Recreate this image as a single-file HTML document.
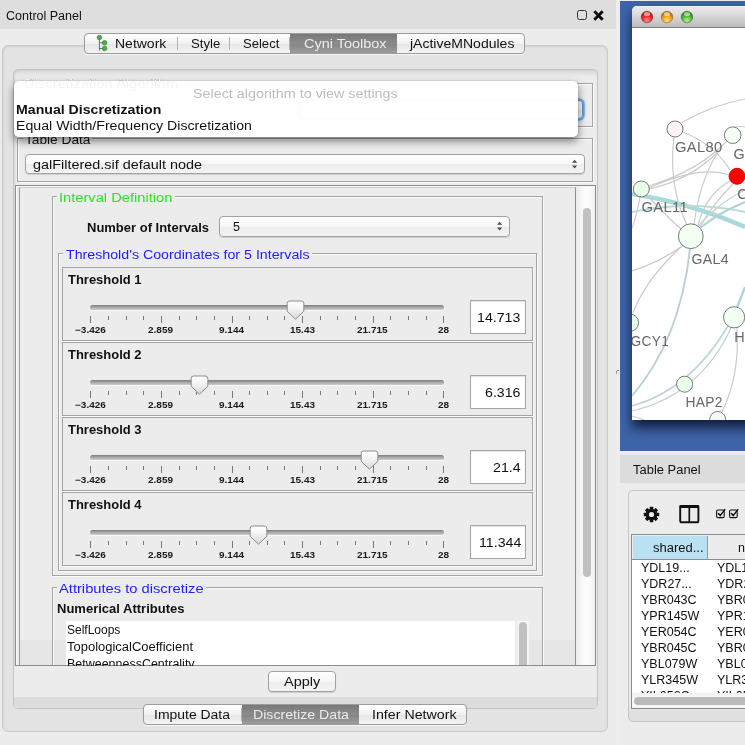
<!DOCTYPE html>
<html><head><meta charset="utf-8">
<style>
html,body{margin:0;padding:0;}
body{width:745px;height:745px;overflow:hidden;background:#ececec;font-family:"Liberation Sans",sans-serif;font-size:13px;color:#111;position:relative;}
.abs{position:absolute;}
.t{position:absolute;white-space:pre;line-height:16px;transform-origin:0 0;will-change:transform;}
.b{font-weight:bold;}
/* title strip */
#title{left:0;top:0;width:616px;height:29px;background:#dedede;}
/* outer rounded panel */
#outer{left:1.5px;top:45px;width:606.5px;height:687px;border:1px solid #cbcbcb;border-radius:6px;background:#e3e3e3;box-sizing:border-box;box-shadow:inset 0 1px 2px rgba(0,0,0,.07),inset 1px 0 2px rgba(0,0,0,.05);}
#inner{left:12.5px;top:69px;width:585.5px;height:640px;border:1px solid #c4c4c4;border-radius:5px;background:linear-gradient(#d9d9d9,#ececec 7px);box-sizing:border-box;box-shadow:inset 1px 0 2px rgba(0,0,0,.10);}
/* tabs */
.tabs{position:absolute;height:21px;border:1px solid #9c9c9c;border-radius:4px;box-sizing:border-box;background:linear-gradient(#ffffff,#f1f1f1 50%,#e6e6e6 51%,#f3f3f3);display:flex;overflow:hidden;box-shadow:0 1px 0 rgba(255,255,255,.6);}
.tabs div{height:19px;box-sizing:border-box;position:relative;}
.tabs div:after{content:"";position:absolute;right:0;top:3px;height:13px;width:1px;background:#b2b2b2;}
.tabs div:last-child:after{display:none;}
.tabs div.sel{background:linear-gradient(#787878,#8c8c8c 50%,#848484 51%,#9c9c9c);}
.tabs div.sel:after{display:none;}
/* etched group borders */
.grp{position:absolute;box-sizing:border-box;border:1px solid #a4a4a4;box-shadow:1px 1px 0 #fafafa, inset 1px 1px 0 #fafafa;}
.gap{position:absolute;background:#ececec;height:5px;}
.combo{position:absolute;box-sizing:border-box;border:1px solid #a2a2a2;border-radius:4px;background:linear-gradient(#ffffff,#f6f6f6 50%,#ececec 51%,#f4f4f4);box-shadow:0 1px 1px rgba(0,0,0,.12);}
.combo span{position:absolute;left:8px;top:1px;line-height:16px;font-size:13px;}
.arr{position:absolute;right:6.5px;top:4.2px;width:5.2px;height:10.2px;}
.field{position:absolute;box-sizing:border-box;width:56px;height:34px;border:1px solid #a6a6a6;background:#fff;box-shadow:inset 0 1px 1px rgba(0,0,0,.12);text-align:right;line-height:32px;font-size:14px;padding-right:4px;}
.th{position:absolute;left:62px;width:471px;height:74px;box-sizing:border-box;border:1px solid #a4a4a4;box-shadow:1px 1px 0 #fafafa;}
.th .name{position:absolute;left:4px;top:4px;font-weight:bold;font-size:13px;line-height:16px;}
.track{position:absolute;left:27px;top:37.2px;width:354px;height:4.5px;border-radius:2.5px;background:linear-gradient(#7c7c7c,#a6a6a6 45%,#cecece);box-shadow:0 1px 0 #f8f8f8;}
.tk{position:absolute;top:48px;width:1px;background:#777;}
.tl{position:absolute;top:56px;width:60px;margin-left:-30px;text-align:center;font-size:10px;font-weight:bold;line-height:12px;color:#222;}
.knob{position:absolute;top:32.2px;width:19px;height:21px;}
</style></head><body>

<div class="abs" id="title"></div>
<!-- float / close icons -->
<div class="abs" style="left:577px;top:10px;width:10px;height:10px;border:1.3px solid #333;border-radius:2.5px;box-sizing:border-box;"></div>
<svg class="abs" style="left:593px;top:10px" width="11" height="11" viewBox="0 0 11 11"><path d="M1.3 1.3 L9.7 9.7 M9.7 1.3 L1.3 9.7" stroke="#0a0a0a" stroke-width="2.9"/></svg>

<div class="abs" id="outer"></div>
<div class="abs" id="inner"></div>

<!-- top tabs -->
<div class="tabs" style="left:84px;top:33px;width:441px;">
  <div style="width:93px;"></div>
  <div style="width:52px;"></div>
  <div style="width:60px;"></div>
  <div class="sel" style="width:107px;"></div>
  <div style="width:126px;"></div>
</div>
<svg class="abs" style="left:96px;top:35px" width="14" height="18" viewBox="0 0 14 18">
  <path d="M3.4 3 V15.6 M3.4 7.8 H7 M3.4 13.5 H7" stroke="#5f6f9f" stroke-width="1" fill="none"/>
  <circle cx="3.4" cy="2.5" r="2.3" fill="#58aa48" stroke="#2f8a2f" stroke-width=".7"/>
  <circle cx="8.6" cy="7.8" r="2.3" fill="#58aa48" stroke="#2f8a2f" stroke-width=".7"/>
  <circle cx="8.6" cy="13.5" r="2.3" fill="#58aa48" stroke="#2f8a2f" stroke-width=".7"/>
</svg>

<!-- Discretization algorithm group (mostly hidden under popup) -->
<div class="grp" style="left:17px;top:83px;width:576px;height:44px;"></div>
<div class="combo" style="left:300px;top:100px;width:283px;height:19px;border-color:#5a90d4;box-shadow:0 0 0 1.6px #6aa0e0,0 0 2px 2px rgba(110,165,230,.55);"></div>

<!-- Table data group -->
<div class="grp" style="left:17px;top:138px;width:576px;height:44px;"></div>
<div class="gap" style="left:23px;top:136px;width:69px;"></div>
<div class="combo" style="left:25px;top:154px;width:560px;height:20px;">
 <svg class="arr" viewBox="0 0 6 10"><path d="M3 0 L6 3.4 H0 Z M3 10 L6 6.6 H0 Z" fill="#4a4a4a"/></svg></div>

<!-- scroll pane -->
<div class="abs" style="left:15px;top:185px;width:581px;height:481px;box-sizing:border-box;border:1px solid #8c8c8c;"></div>
<div class="abs" style="left:16px;top:186px;width:579px;height:480px;box-sizing:border-box;border-left:1px solid #fafafa;border-top:1px solid #f6f6f6;"></div>
<div class="abs" style="left:19px;top:187px;width:557px;height:479px;box-sizing:border-box;border-left:1px solid #9c9c9c;border-right:1px solid #8e8e8e;border-top:1px solid #cfcfcf;"></div>
<!-- vertical scrollbar -->
<div class="abs" style="left:577px;top:187px;width:18px;height:479px;background:linear-gradient(90deg,#ececec,#f6f6f6 25%,#fdfdfd 50%,#f8f8f8 80%,#ededed);"></div>
<div class="abs" style="left:583px;top:208px;width:8px;height:369px;border-radius:4px;background:#c0c0c0;"></div>

<!-- Interval definition -->
<div class="grp" style="left:52px;top:196px;width:491px;height:380px;"></div>
<div class="gap" style="left:57px;top:194px;width:118px;"></div>
<div class="combo" style="left:219px;top:216px;width:291px;height:21px;">
 <svg class="arr" viewBox="0 0 6 10"><path d="M3 0 L6 3.4 H0 Z M3 10 L6 6.6 H0 Z" fill="#4a4a4a"/></svg></div>

<div class="grp" style="left:58px;top:253px;width:479px;height:318px;"></div>
<div class="gap" style="left:63px;top:251px;width:249px;"></div>

<!-- thresholds inserted here -->
<div class="th" style="top:267px;"><div class="track"></div><div class="tk" style="left:27.3px;height:7px;"></div><div class="tk" style="left:44.9px;height:3.5px;"></div><div class="tk" style="left:62.6px;height:3.5px;"></div><div class="tk" style="left:80.2px;height:3.5px;"></div><div class="tk" style="left:97.9px;height:7px;"></div><div class="tk" style="left:115.5px;height:3.5px;"></div><div class="tk" style="left:133.2px;height:3.5px;"></div><div class="tk" style="left:150.8px;height:3.5px;"></div><div class="tk" style="left:168.5px;height:7px;"></div><div class="tk" style="left:186.1px;height:3.5px;"></div><div class="tk" style="left:203.8px;height:3.5px;"></div><div class="tk" style="left:221.4px;height:3.5px;"></div><div class="tk" style="left:239.1px;height:7px;"></div><div class="tk" style="left:256.8px;height:3.5px;"></div><div class="tk" style="left:274.4px;height:3.5px;"></div><div class="tk" style="left:292.1px;height:3.5px;"></div><div class="tk" style="left:309.7px;height:7px;"></div><div class="tk" style="left:327.3px;height:3.5px;"></div><div class="tk" style="left:345.0px;height:3.5px;"></div><div class="tk" style="left:362.6px;height:3.5px;"></div><div class="tk" style="left:380.3px;height:7px;"></div><svg class="knob" style="left:223.0px" viewBox="0 0 19 21"><defs><linearGradient id="g0" x1="0" y1="0" x2="0" y2="1"><stop offset="0" stop-color="#ffffff"/><stop offset=".35" stop-color="#f6f6f6"/><stop offset="1" stop-color="#d8d8d8"/></linearGradient></defs><path d="M3.6 1 H15.4 Q17.85 1 17.85 3.4 V11.3 L9.5 19.2 L1.15 11.3 V3.4 Q1.15 1 3.6 1 Z" fill="url(#g0)" stroke="#8c8c8c" stroke-width="1"/></svg><div class="field" style="left:407px;top:32px;"></div></div>
<div class="th" style="top:342px;"><div class="track"></div><div class="tk" style="left:27.3px;height:7px;"></div><div class="tk" style="left:44.9px;height:3.5px;"></div><div class="tk" style="left:62.6px;height:3.5px;"></div><div class="tk" style="left:80.2px;height:3.5px;"></div><div class="tk" style="left:97.9px;height:7px;"></div><div class="tk" style="left:115.5px;height:3.5px;"></div><div class="tk" style="left:133.2px;height:3.5px;"></div><div class="tk" style="left:150.8px;height:3.5px;"></div><div class="tk" style="left:168.5px;height:7px;"></div><div class="tk" style="left:186.1px;height:3.5px;"></div><div class="tk" style="left:203.8px;height:3.5px;"></div><div class="tk" style="left:221.4px;height:3.5px;"></div><div class="tk" style="left:239.1px;height:7px;"></div><div class="tk" style="left:256.8px;height:3.5px;"></div><div class="tk" style="left:274.4px;height:3.5px;"></div><div class="tk" style="left:292.1px;height:3.5px;"></div><div class="tk" style="left:309.7px;height:7px;"></div><div class="tk" style="left:327.3px;height:3.5px;"></div><div class="tk" style="left:345.0px;height:3.5px;"></div><div class="tk" style="left:362.6px;height:3.5px;"></div><div class="tk" style="left:380.3px;height:7px;"></div><svg class="knob" style="left:126.8px" viewBox="0 0 19 21"><defs><linearGradient id="g1" x1="0" y1="0" x2="0" y2="1"><stop offset="0" stop-color="#ffffff"/><stop offset=".35" stop-color="#f6f6f6"/><stop offset="1" stop-color="#d8d8d8"/></linearGradient></defs><path d="M3.6 1 H15.4 Q17.85 1 17.85 3.4 V11.3 L9.5 19.2 L1.15 11.3 V3.4 Q1.15 1 3.6 1 Z" fill="url(#g1)" stroke="#8c8c8c" stroke-width="1"/></svg><div class="field" style="left:407px;top:32px;"></div></div>
<div class="th" style="top:417px;"><div class="track"></div><div class="tk" style="left:27.3px;height:7px;"></div><div class="tk" style="left:44.9px;height:3.5px;"></div><div class="tk" style="left:62.6px;height:3.5px;"></div><div class="tk" style="left:80.2px;height:3.5px;"></div><div class="tk" style="left:97.9px;height:7px;"></div><div class="tk" style="left:115.5px;height:3.5px;"></div><div class="tk" style="left:133.2px;height:3.5px;"></div><div class="tk" style="left:150.8px;height:3.5px;"></div><div class="tk" style="left:168.5px;height:7px;"></div><div class="tk" style="left:186.1px;height:3.5px;"></div><div class="tk" style="left:203.8px;height:3.5px;"></div><div class="tk" style="left:221.4px;height:3.5px;"></div><div class="tk" style="left:239.1px;height:7px;"></div><div class="tk" style="left:256.8px;height:3.5px;"></div><div class="tk" style="left:274.4px;height:3.5px;"></div><div class="tk" style="left:292.1px;height:3.5px;"></div><div class="tk" style="left:309.7px;height:7px;"></div><div class="tk" style="left:327.3px;height:3.5px;"></div><div class="tk" style="left:345.0px;height:3.5px;"></div><div class="tk" style="left:362.6px;height:3.5px;"></div><div class="tk" style="left:380.3px;height:7px;"></div><svg class="knob" style="left:296.8px" viewBox="0 0 19 21"><defs><linearGradient id="g2" x1="0" y1="0" x2="0" y2="1"><stop offset="0" stop-color="#ffffff"/><stop offset=".35" stop-color="#f6f6f6"/><stop offset="1" stop-color="#d8d8d8"/></linearGradient></defs><path d="M3.6 1 H15.4 Q17.85 1 17.85 3.4 V11.3 L9.5 19.2 L1.15 11.3 V3.4 Q1.15 1 3.6 1 Z" fill="url(#g2)" stroke="#8c8c8c" stroke-width="1"/></svg><div class="field" style="left:407px;top:32px;"></div></div>
<div class="th" style="top:492px;"><div class="track"></div><div class="tk" style="left:27.3px;height:7px;"></div><div class="tk" style="left:44.9px;height:3.5px;"></div><div class="tk" style="left:62.6px;height:3.5px;"></div><div class="tk" style="left:80.2px;height:3.5px;"></div><div class="tk" style="left:97.9px;height:7px;"></div><div class="tk" style="left:115.5px;height:3.5px;"></div><div class="tk" style="left:133.2px;height:3.5px;"></div><div class="tk" style="left:150.8px;height:3.5px;"></div><div class="tk" style="left:168.5px;height:7px;"></div><div class="tk" style="left:186.1px;height:3.5px;"></div><div class="tk" style="left:203.8px;height:3.5px;"></div><div class="tk" style="left:221.4px;height:3.5px;"></div><div class="tk" style="left:239.1px;height:7px;"></div><div class="tk" style="left:256.8px;height:3.5px;"></div><div class="tk" style="left:274.4px;height:3.5px;"></div><div class="tk" style="left:292.1px;height:3.5px;"></div><div class="tk" style="left:309.7px;height:7px;"></div><div class="tk" style="left:327.3px;height:3.5px;"></div><div class="tk" style="left:345.0px;height:3.5px;"></div><div class="tk" style="left:362.6px;height:3.5px;"></div><div class="tk" style="left:380.3px;height:7px;"></div><svg class="knob" style="left:186.0px" viewBox="0 0 19 21"><defs><linearGradient id="g3" x1="0" y1="0" x2="0" y2="1"><stop offset="0" stop-color="#ffffff"/><stop offset=".35" stop-color="#f6f6f6"/><stop offset="1" stop-color="#d8d8d8"/></linearGradient></defs><path d="M3.6 1 H15.4 Q17.85 1 17.85 3.4 V11.3 L9.5 19.2 L1.15 11.3 V3.4 Q1.15 1 3.6 1 Z" fill="url(#g3)" stroke="#8c8c8c" stroke-width="1"/></svg><div class="field" style="left:407px;top:32px;"></div></div>

<!-- Attributes to discretize -->
<div class="abs" style="left:20px;top:640px;width:555px;height:26px;background:#e6e6e6;"></div>
<div class="grp" style="left:52px;top:587px;width:491px;height:90px;border-bottom:none;"></div>
<div class="gap" style="left:57px;top:585px;width:149px;"></div>
<div class="abs" style="left:66px;top:621px;width:463px;height:46px;background:#fff;"></div>
<div class="abs" style="left:515px;top:621px;width:14px;height:46px;background:linear-gradient(90deg,#e9e9e9,#f6f6f6 30%,#fdfdfd 60%,#f4f4f4);"></div>
<div class="abs" style="left:519px;top:622px;width:7.5px;height:45px;border-radius:4px 4px 0 0;background:#c0c0c0;"></div>

<!-- bottom strip w/ Apply -->
<div class="abs" style="left:14px;top:666px;width:583px;height:42px;background:#ececec;border-radius:0 0 4px 4px;"></div>
<div class="abs" style="left:15px;top:665px;width:581px;height:1px;background:#8c8c8c;"></div>
<div class="abs" style="left:14px;top:697px;width:583px;height:11px;background:#dcdcdc;border-radius:0 0 4px 4px;"></div>
<div class="combo" style="left:268px;top:671px;width:68px;height:21px;"></div>

<!-- bottom tabs -->
<div class="tabs" style="left:143px;top:704px;width:324px;">
  <div style="width:98px;"></div>
  <div class="sel" style="width:118px;"></div>
  <div style="width:107px;"></div>
</div>

<div class="t" style="left:25.10px;top:132.37px;font-size:12.5px;color:#111;transform:scaleX(1.0943);">Table Data</div>
<div class="t" style="left:24.10px;top:75.92px;font-size:13.5px;color:#111;transform:scaleX(1.0946);">Discretization Algorithm</div>
<!-- popup -->
<div class="abs" style="left:14px;top:81px;width:564px;height:56px;background:rgba(255,255,255,.975);border-radius:5px;box-shadow:0 4px 8px rgba(0,0,0,.5),0 0 1px rgba(0,0,0,.45);"></div>

<!-- RIGHT SIDE -->
<div class="abs" style="left:616px;top:0;width:4px;height:745px;background:#ededed;"></div>
<div class="abs" style="left:620px;top:0;width:125px;height:745px;background:#ececec;"></div>
<div class="abs" id="desk" style="left:620px;top:1px;width:125px;height:450px;background:#3d63a9;overflow:hidden;">
  <!-- window shadow -->
  <div class="abs" style="left:12px;top:5px;width:125px;height:414px;box-shadow:0 8px 12px 0px rgba(0,0,20,.7);border-radius:5px 5px 0 0;background:#fff;"></div>
  <!-- title bar -->
  <div class="abs" style="left:12px;top:5px;width:125px;height:21px;border-radius:5px 0 0 0;background:linear-gradient(#ededed,#d6d6d6 50%,#bcbcbc);border-bottom:1px solid #7e7e7e;box-sizing:content-box;"></div>
  <svg class="abs" style="left:12px;top:5px" width="113" height="21" viewBox="0 0 113 21">
    <defs>
      <radialGradient id="rr" cx=".5" cy=".8" r=".7"><stop offset="0" stop-color="#ff8a8a"/><stop offset=".55" stop-color="#ee2d2d"/><stop offset="1" stop-color="#a81414"/></radialGradient>
      <radialGradient id="ry" cx=".5" cy=".8" r=".7"><stop offset="0" stop-color="#ffe07a"/><stop offset=".55" stop-color="#f0a21e"/><stop offset="1" stop-color="#a86a10"/></radialGradient>
      <radialGradient id="rg" cx=".5" cy=".8" r=".7"><stop offset="0" stop-color="#b8f09a"/><stop offset=".55" stop-color="#58b83a"/><stop offset="1" stop-color="#2e7a1c"/></radialGradient>
    </defs>
    <circle cx="15" cy="11" r="5.8" fill="url(#rr)" stroke="#8a3030" stroke-width=".6"/>
    <circle cx="35" cy="11" r="5.8" fill="url(#ry)" stroke="#8a6a30" stroke-width=".6"/>
    <circle cx="55" cy="11" r="5.8" fill="url(#rg)" stroke="#3a7a30" stroke-width=".6"/>
    <ellipse cx="15" cy="8" rx="3.2" ry="2" fill="rgba(255,255,255,.55)"/>
    <ellipse cx="35" cy="8" rx="3.2" ry="2" fill="rgba(255,255,255,.55)"/>
    <ellipse cx="55" cy="8" rx="3.2" ry="2" fill="rgba(255,255,255,.55)"/>
  </svg>
  <!-- canvas: page coords = svg coords + (632,28) ; svg placed at desk-relative (12,27) -->
  <svg class="abs" style="left:12px;top:27px;background:#fff;will-change:transform" width="113" height="392" viewBox="632 28 113 392" font-family="Liberation Sans, sans-serif">
    <g fill="none" stroke="#cbcbcb" stroke-width="1.2">
      <path d="M681 123 Q712 105 745 99"/>
      <path d="M683 132 Q715 145 730 170"/>
      <path d="M674 137 Q668 185 687 225"/>
      <path d="M649 186 Q700 170 727 141"/>
      <path d="M649 189 Q690 180 718 152 "/>
      <path d="M649 188 Q700 165 729 175"/>
      <path d="M718 152 Q700 180 694 224"/>
      <path d="M730 181 Q705 195 698 226"/>
      <path d="M733 184 Q712 205 700 227"/>
      <path d="M647 195 Q665 215 681 229"/>
      <path d="M640 197 Q637 215 632 228"/>
      <path d="M684 245 Q660 262 632 271"/>
      <path d="M682 246 Q645 280 633 313"/>
      <path d="M731 328 Q700 395 632 411"/>
      <path d="M737 328 Q740 375 722 412"/>
      <path d="M632 416 Q640 418 646 421"/>
      <path d="M735 127 Q740 126 745 127"/>
    </g>
    <g fill="none" stroke-linecap="butt">
      <path d="M632 194 Q690 203 745 227" stroke="#a9d9da" stroke-width="4.6"/>
      <path d="M632 212 Q690 200 745 212" stroke="#bcdada" stroke-width="2"/>
      <path d="M700 228 Q720 212 745 202" stroke="#b4d4d4" stroke-width="2.2"/>
      <path d="M697 228 Q715 205 745 190" stroke="#c0d8d8" stroke-width="1.3"/>
      <path d="M690 249 Q680 340 632 396" stroke="#b7d1d3" stroke-width="1.9"/>
      <path d="M728 326 Q690 390 632 406" stroke="#bcd4d5" stroke-width="1.6"/>
      <path d="M745 287 Q741 298 737 307" stroke="#a9d5d6" stroke-width="2.2"/>
    </g>
    <g stroke="#6a6a6a" stroke-width=".9">
      <circle cx="675" cy="129" r="8" fill="#fff3f3"/>
      <circle cx="732.7" cy="135.2" r="8.3" fill="#f5fff5"/>
      <circle cx="737" cy="176.3" r="8" fill="#ff0000" stroke="#e00000"/>
      <circle cx="641.3" cy="189" r="8" fill="#e9ffe9"/>
      <circle cx="690.8" cy="236.2" r="12.4" fill="#f3fff3"/>
      <circle cx="734.1" cy="317.3" r="10.6" fill="#f3fff3"/>
      <circle cx="630" cy="322.7" r="8.6" fill="#e6ffe6"/>
      <circle cx="684.6" cy="384.2" r="8" fill="#ecffec"/>
      <circle cx="717.7" cy="419.5" r="8" fill="#f0fff0"/>
    </g>
    <g fill="#676767" font-size="14.4" letter-spacing=".3">
      <text x="675" y="151.7" textLength="47.5" lengthAdjust="spacingAndGlyphs">GAL80</text>
      <text x="733.5" y="158.7">GA</text>
      <text x="737.2" y="199.3">C</text>
      <text x="641.5" y="211.6" textLength="46.5" lengthAdjust="spacingAndGlyphs">GAL11</text>
      <text x="691.5" y="263.8" textLength="37.3" lengthAdjust="spacingAndGlyphs">GAL4</text>
      <text x="630.6" y="345.6" textLength="38.5" lengthAdjust="spacingAndGlyphs">GCY1</text>
      <text x="734.3" y="342.3">H</text>
      <text x="685.5" y="407.4" textLength="37.3" lengthAdjust="spacingAndGlyphs">HAP2</text>
    </g>
  </svg>
</div>

<!-- small divider mark -->
<div class="abs" style="left:616px;top:370px;width:3px;height:4px;border-top:1px solid #777;border-left:1px solid #999;border-radius:2px 0 0 0;box-sizing:border-box;"></div>

<!-- Table panel -->
<div class="abs" style="left:620px;top:455px;width:125px;height:28px;background:#dcdcdc;"></div>
<div class="abs" style="left:628px;top:490px;width:130px;height:232px;box-sizing:border-box;border:1px solid #c4c4c4;border-radius:5px;background:linear-gradient(#ececec 0,#ececec 212px,#e0e0e0 220px);"></div>
<!-- gear -->
<svg class="abs" style="left:642px;top:505px" width="19" height="19" viewBox="-9.5 -9.5 19 19">
  <g fill="#111">
    <circle r="5.7"/>
    <g id="teeth"><rect x="-1.8" y="-7.7" width="3.6" height="15.4" rx=".6"/></g>
    <rect x="-1.8" y="-7.7" width="3.6" height="15.4" rx=".6" transform="rotate(45)"/>
    <rect x="-1.8" y="-7.7" width="3.6" height="15.4" rx=".6" transform="rotate(90)"/>
    <rect x="-1.8" y="-7.7" width="3.6" height="15.4" rx=".6" transform="rotate(135)"/>
  </g>
  <circle r="2.6" fill="#ececec"/>
</svg>
<!-- split icon -->
<svg class="abs" style="left:678px;top:504px" width="23" height="21" viewBox="0 0 23 21">
  <rect x="2.2" y="2" width="18.2" height="16.3" rx="1.6" fill="none" stroke="#111" stroke-width="1.9"/>
  <rect x="1.4" y="1" width="19.8" height="3" rx="1.2" fill="#111"/>
  <path d="M11.3 3 V18" stroke="#111" stroke-width="1.7"/>
</svg>
<!-- checkboxes -->
<svg class="abs" style="left:715px;top:507px" width="30" height="13" viewBox="0 0 30 13">
  <g fill="none" stroke="#111" stroke-width="1.1">
    <rect x="1.6" y="3" width="7.6" height="7.6" rx="1.4"/>
    <rect x="14.6" y="3" width="7.6" height="7.6" rx="1.4"/>
  </g>
  <g fill="none" stroke="#111" stroke-width="1.5" stroke-linecap="round" stroke-linejoin="round">
    <path d="M3.4 6.6 L5.2 8.6 L9.8 2.6"/>
    <path d="M16.4 6.6 L18.2 8.6 L22.8 2.6"/>
  </g>
</svg>
<!-- table -->
<div class="abs" style="left:631px;top:534px;width:120px;height:175px;box-sizing:border-box;border:1px solid #8a8a8a;background:#fff;"></div>
<div class="abs" style="left:632px;top:535px;width:113px;height:24px;background:#ececec;border-bottom:1px solid #8e8e8e;"></div>
<div class="abs" style="left:633px;top:536px;width:75px;height:23px;background:#b9e1f2;border-right:1px solid #9a9a9a;box-sizing:border-box;"></div>
<div class="abs" style="left:632px;top:693px;width:113px;height:15px;background:linear-gradient(#efefef,#fbfbfb 40%,#f4f4f4);"></div>
<div class="abs" style="left:634px;top:697px;width:130px;height:8px;border-radius:4px;background:#bababa;"></div>

<div class="t" style="left:6.40px;top:8.17px;font-size:12.5px;color:#111;transform:scaleX(0.9967);">Control Panel</div>
<div class="t" style="left:114.60px;top:35.87px;font-size:12.5px;color:#111;transform:scaleX(1.1190);">Network</div>
<div class="t" style="left:190.70px;top:35.87px;font-size:12.5px;color:#111;transform:scaleX(1.0541);">Style</div>
<div class="t" style="left:243.40px;top:35.87px;font-size:12.5px;color:#111;transform:scaleX(1.0446);">Select</div>
<div class="t" style="left:303.50px;top:35.87px;font-size:12.5px;color:#ececec;transform:scaleX(1.1564);">Cyni Toolbox</div>
<div class="t" style="left:410.20px;top:35.87px;font-size:12.5px;color:#111;transform:scaleX(1.1215);">jActiveMNodules</div>
<div class="t" style="left:153.50px;top:706.77px;font-size:12.5px;color:#111;transform:scaleX(1.1161);">Impute Data</div>
<div class="t" style="left:253.10px;top:706.77px;font-size:12.5px;color:#ececec;transform:scaleX(1.1327);">Discretize Data</div>
<div class="t" style="left:372.00px;top:706.77px;font-size:12.5px;color:#111;transform:scaleX(1.1380);">Infer Network</div>
<div class="t" style="left:284.10px;top:674.37px;font-size:12.5px;color:#111;transform:scaleX(1.1572);">Apply</div>
<div class="t" style="left:32.80px;top:156.97px;font-size:12.5px;color:#111;transform:scaleX(1.1526);">galFiltered.sif default node</div>
<div class="t" style="left:59.30px;top:190.27px;font-size:12.5px;color:#2ae32a;transform:scaleX(1.1731);">Interval Definition</div>
<div class="t" style="left:86.80px;top:219.97px;font-size:12.5px;color:#111;font-weight:bold;transform:scaleX(1.0393);">Number of Intervals</div>
<div class="t" style="left:233.00px;top:219.17px;font-size:12.5px;color:#111;">5</div>
<div class="t" style="left:65.80px;top:247.07px;font-size:12.5px;color:#1e1ef6;transform:scaleX(1.1367);">Threshold's Coordinates for 5 Intervals</div>
<div class="t" style="left:67.50px;top:272.17px;font-size:12.5px;color:#111;font-weight:bold;transform:scaleX(1.0375);">Threshold 1</div>
<div class="t" style="left:477.46px;top:309.90px;font-size:13px;color:#111;transform:scaleX(1.0900);">14.713</div>
<div class="t" style="left:74.88px;top:322.18px;font-size:9px;color:#1a1a1a;font-weight:bold;transform:scaleX(1.1100);">−3.426</div>
<div class="t" style="left:148.40px;top:322.18px;font-size:9px;color:#1a1a1a;font-weight:bold;transform:scaleX(1.1100);">2.859</div>
<div class="t" style="left:219.00px;top:322.18px;font-size:9px;color:#1a1a1a;font-weight:bold;transform:scaleX(1.1100);">9.144</div>
<div class="t" style="left:289.60px;top:322.18px;font-size:9px;color:#1a1a1a;font-weight:bold;transform:scaleX(1.1100);">15.43</div>
<div class="t" style="left:357.42px;top:322.18px;font-size:9px;color:#1a1a1a;font-weight:bold;transform:scaleX(1.1100);">21.715</div>
<div class="t" style="left:437.74px;top:322.18px;font-size:9px;color:#1a1a1a;font-weight:bold;transform:scaleX(1.1100);">28</div>
<div class="t" style="left:67.50px;top:347.17px;font-size:12.5px;color:#111;font-weight:bold;transform:scaleX(1.0375);">Threshold 2</div>
<div class="t" style="left:485.32px;top:384.90px;font-size:13px;color:#111;transform:scaleX(1.0900);">6.316</div>
<div class="t" style="left:74.88px;top:397.18px;font-size:9px;color:#1a1a1a;font-weight:bold;transform:scaleX(1.1100);">−3.426</div>
<div class="t" style="left:148.40px;top:397.18px;font-size:9px;color:#1a1a1a;font-weight:bold;transform:scaleX(1.1100);">2.859</div>
<div class="t" style="left:219.00px;top:397.18px;font-size:9px;color:#1a1a1a;font-weight:bold;transform:scaleX(1.1100);">9.144</div>
<div class="t" style="left:289.60px;top:397.18px;font-size:9px;color:#1a1a1a;font-weight:bold;transform:scaleX(1.1100);">15.43</div>
<div class="t" style="left:357.42px;top:397.18px;font-size:9px;color:#1a1a1a;font-weight:bold;transform:scaleX(1.1100);">21.715</div>
<div class="t" style="left:437.74px;top:397.18px;font-size:9px;color:#1a1a1a;font-weight:bold;transform:scaleX(1.1100);">28</div>
<div class="t" style="left:67.50px;top:422.17px;font-size:12.5px;color:#111;font-weight:bold;transform:scaleX(1.0375);">Threshold 3</div>
<div class="t" style="left:493.21px;top:459.90px;font-size:13px;color:#111;transform:scaleX(1.0900);">21.4</div>
<div class="t" style="left:74.88px;top:472.18px;font-size:9px;color:#1a1a1a;font-weight:bold;transform:scaleX(1.1100);">−3.426</div>
<div class="t" style="left:148.40px;top:472.18px;font-size:9px;color:#1a1a1a;font-weight:bold;transform:scaleX(1.1100);">2.859</div>
<div class="t" style="left:219.00px;top:472.18px;font-size:9px;color:#1a1a1a;font-weight:bold;transform:scaleX(1.1100);">9.144</div>
<div class="t" style="left:289.60px;top:472.18px;font-size:9px;color:#1a1a1a;font-weight:bold;transform:scaleX(1.1100);">15.43</div>
<div class="t" style="left:357.42px;top:472.18px;font-size:9px;color:#1a1a1a;font-weight:bold;transform:scaleX(1.1100);">21.715</div>
<div class="t" style="left:437.74px;top:472.18px;font-size:9px;color:#1a1a1a;font-weight:bold;transform:scaleX(1.1100);">28</div>
<div class="t" style="left:67.50px;top:497.17px;font-size:12.5px;color:#111;font-weight:bold;transform:scaleX(1.0375);">Threshold 4</div>
<div class="t" style="left:478.51px;top:534.90px;font-size:13px;color:#111;transform:scaleX(1.0900);">11.344</div>
<div class="t" style="left:74.88px;top:547.18px;font-size:9px;color:#1a1a1a;font-weight:bold;transform:scaleX(1.1100);">−3.426</div>
<div class="t" style="left:148.40px;top:547.18px;font-size:9px;color:#1a1a1a;font-weight:bold;transform:scaleX(1.1100);">2.859</div>
<div class="t" style="left:219.00px;top:547.18px;font-size:9px;color:#1a1a1a;font-weight:bold;transform:scaleX(1.1100);">9.144</div>
<div class="t" style="left:289.60px;top:547.18px;font-size:9px;color:#1a1a1a;font-weight:bold;transform:scaleX(1.1100);">15.43</div>
<div class="t" style="left:357.42px;top:547.18px;font-size:9px;color:#1a1a1a;font-weight:bold;transform:scaleX(1.1100);">21.715</div>
<div class="t" style="left:437.74px;top:547.18px;font-size:9px;color:#1a1a1a;font-weight:bold;transform:scaleX(1.1100);">28</div>
<div class="t" style="left:59.10px;top:580.77px;font-size:12.5px;color:#1e1ef6;transform:scaleX(1.1759);">Attributes to discretize</div>
<div class="t" style="left:56.70px;top:600.97px;font-size:12.5px;color:#111;font-weight:bold;transform:scaleX(1.0409);">Numerical Attributes</div>
<div class="t" style="left:67.40px;top:622.24px;font-size:12px;color:#111;transform:scaleX(0.9930);">SelfLoops</div>
<div class="t" style="left:67.40px;top:639.04px;font-size:12px;color:#111;transform:scaleX(1.0813);">TopologicalCoefficient</div>
<div class="abs" style="left:0px;top:0px;width:745px;height:666px;overflow:hidden;"><div class="t" style="left:67.40px;top:655.84px;font-size:12px;color:#111;transform:scaleX(1.0396);">BetweennessCentrality</div></div>
<div class="t" style="left:24.10px;top:75.92px;font-size:13.5px;color:#f5f5f5;transform:scaleX(1.0946);">Discretization Algorithm</div>
<div class="t" style="left:193.40px;top:85.97px;font-size:12.5px;color:#bdbdbd;transform:scaleX(1.1464);">Select algorithm to view settings</div>
<div class="t" style="left:15.70px;top:101.97px;font-size:12.5px;color:#111;font-weight:bold;transform:scaleX(1.1307);">Manual Discretization</div>
<div class="t" style="left:15.70px;top:118.17px;font-size:12.5px;color:#111;transform:scaleX(1.1322);">Equal Width/Frequency Discretization</div>
<div class="t" style="left:633.30px;top:462.07px;font-size:12.5px;color:#111;transform:scaleX(1.0363);">Table Panel</div>
<div class="t" style="left:652.50px;top:540.07px;font-size:12.5px;color:#111;transform:scaleX(1.0382);">shared...</div>
<div class="t" style="left:737.70px;top:540.07px;font-size:12.5px;color:#111;">na</div>
<div class="t" style="left:641.20px;top:559.97px;font-size:12.5px;color:#111;">YDL19...</div>
<div class="t" style="left:716.70px;top:559.97px;font-size:12.5px;color:#111;">YDL194W</div>
<div class="t" style="left:641.20px;top:575.97px;font-size:12.5px;color:#111;">YDR27...</div>
<div class="t" style="left:716.70px;top:575.97px;font-size:12.5px;color:#111;">YDR277C</div>
<div class="t" style="left:641.20px;top:591.97px;font-size:12.5px;color:#111;">YBR043C</div>
<div class="t" style="left:716.70px;top:591.97px;font-size:12.5px;color:#111;">YBR043C</div>
<div class="t" style="left:641.20px;top:607.97px;font-size:12.5px;color:#111;">YPR145W</div>
<div class="t" style="left:716.70px;top:607.97px;font-size:12.5px;color:#111;">YPR145W</div>
<div class="t" style="left:641.20px;top:623.97px;font-size:12.5px;color:#111;">YER054C</div>
<div class="t" style="left:716.70px;top:623.97px;font-size:12.5px;color:#111;">YER054C</div>
<div class="t" style="left:641.20px;top:639.97px;font-size:12.5px;color:#111;">YBR045C</div>
<div class="t" style="left:716.70px;top:639.97px;font-size:12.5px;color:#111;">YBR045C</div>
<div class="t" style="left:641.20px;top:655.97px;font-size:12.5px;color:#111;">YBL079W</div>
<div class="t" style="left:716.70px;top:655.97px;font-size:12.5px;color:#111;">YBL079W</div>
<div class="t" style="left:641.20px;top:671.97px;font-size:12.5px;color:#111;">YLR345W</div>
<div class="t" style="left:716.70px;top:671.97px;font-size:12.5px;color:#111;">YLR345W</div>
<div class="abs" style="left:0px;top:0px;width:745px;height:693px;overflow:hidden;"><div class="t" style="left:641.20px;top:687.97px;font-size:12.5px;color:#111;">YIL052C</div></div>
<div class="abs" style="left:0px;top:0px;width:745px;height:693px;overflow:hidden;"><div class="t" style="left:716.70px;top:687.97px;font-size:12.5px;color:#111;">YIL052C</div></div>
</body></html>
